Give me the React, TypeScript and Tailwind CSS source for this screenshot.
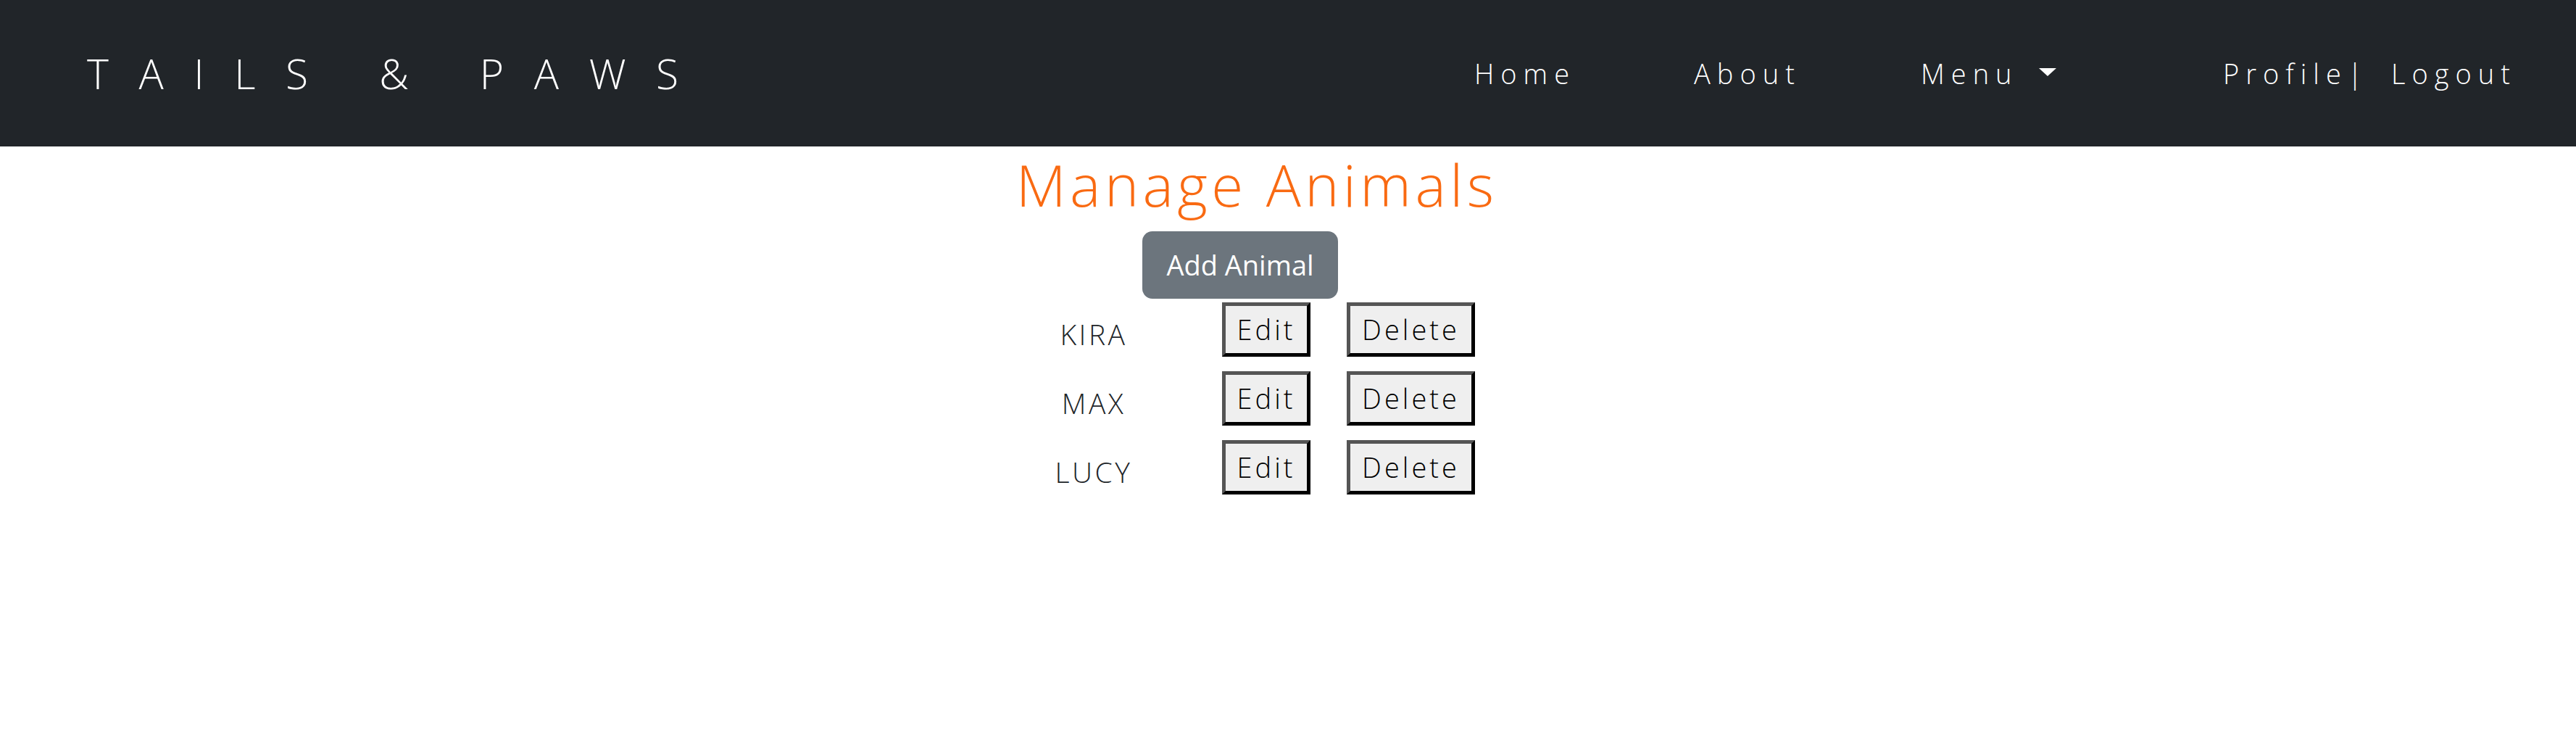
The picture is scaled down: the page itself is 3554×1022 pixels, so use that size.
const animals = ["KIRA", "MAX", "LUCY"];

const font = "font-['Open_Sans','Noto_Sans',sans-serif]";

function NavLink({ label, width }: { label: string; width: string }) {
  return (
    <a href="#" className={`${width} text-[38px] font-light tracking-[9px] text-white`}>
      {label}
    </a>
  );
}

export default function App() {
  return (
    <div className={`min-h-screen bg-white ${font}`}>
      {/* Navbar */}
      <nav className="flex h-[202px] items-center justify-between bg-[#212529] pl-[120px]">
        <a href="#" className="text-[57px] font-light leading-none tracking-[41.6px] text-white">
          TAILS &amp; PAWS
        </a>
        <div className="flex items-center">
          <NavLink label="Home" width="w-[303px]" />
          <NavLink label="About" width="w-[313px]" />
          <div className="flex w-[417px] items-center">
            <a href="#" className="text-[38px] font-light tracking-[9px] text-white">
              Menu
            </a>
            <span className="ml-[28px] mt-[-4px] h-0 w-0 border-x-[12px] border-t-[11px] border-x-transparent border-t-white" />
          </div>
          <NavLink label="Profile|" width="w-[232px]" />
          <NavLink label="Logout" width="w-[255px]" />
        </div>
      </nav>

      {/* Content */}
      <main className="flex justify-center pr-[86px]">
        <div className="flex w-[670px] flex-col">
          <h1 className="mt-[12px] text-center text-[80px] font-light leading-none tracking-[5.4px] text-[#f96a12]">
            Manage Animals
          </h1>

          <button className="ml-[177px] mt-[25px] flex h-[93px] w-[270px] items-center justify-center rounded-[14px] bg-[#6c757d] text-[38px] text-white">
            Add Animal
          </button>

          <div className="mt-[5px] flex flex-col gap-[20px]">
            {animals.map((name) => (
              <div key={name} className="flex items-center">
                <span className="mt-[14px] w-[220px] text-center text-[39px] font-light tracking-[3.5px] text-[#212529]">
                  {name}
                </span>
                <button className="ml-[67px] flex h-[75px] w-[122px] items-center justify-center border-[5px] border-b-black border-l-[#555] border-r-black border-t-[#555] bg-[#efefef] text-[38px] font-light tracking-[4px] text-black">
                  Edit
                </button>
                <button className="ml-[50px] flex h-[75px] w-[177px] items-center justify-center border-[5px] border-b-black border-l-[#555] border-r-black border-t-[#555] bg-[#efefef] text-[38px] font-light tracking-[4px] text-black">
                  Delete
                </button>
              </div>
            ))}
          </div>
        </div>
      </main>
    </div>
  );
}
